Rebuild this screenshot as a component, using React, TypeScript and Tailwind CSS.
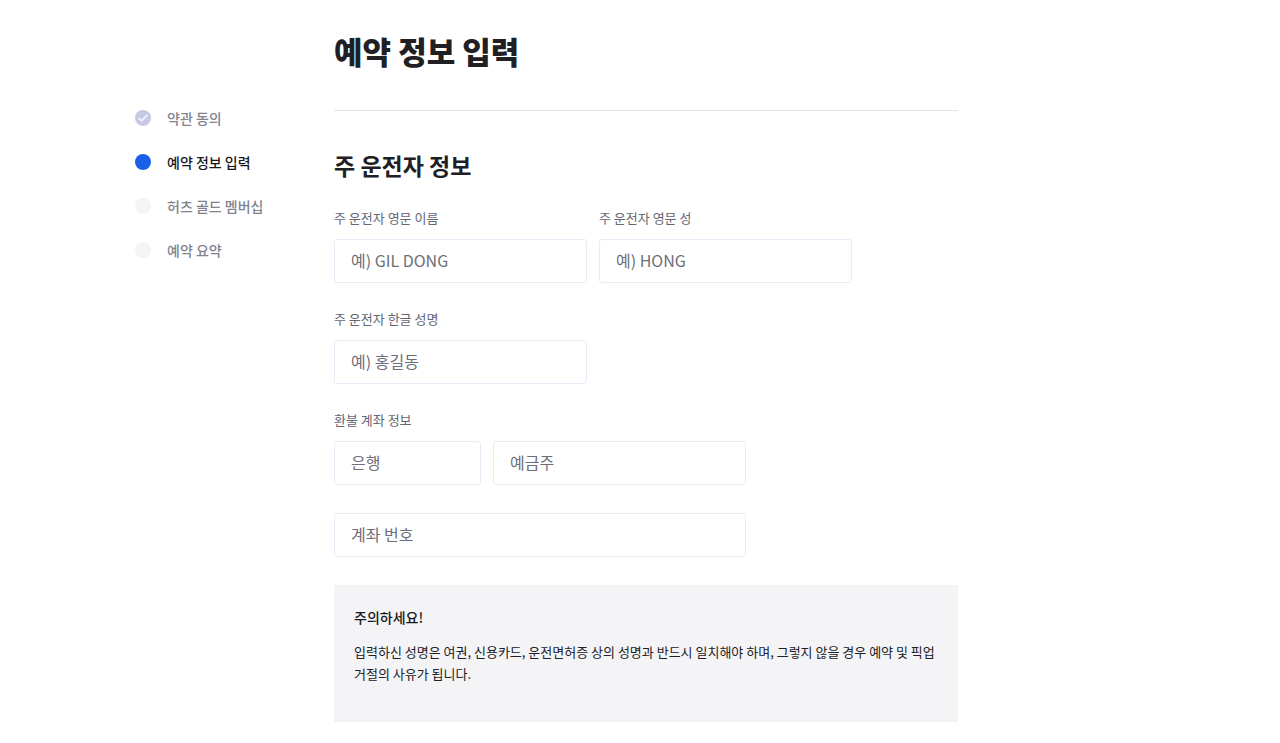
import { InputHTMLAttributes } from "react";

type StepState = "done" | "current" | "upcoming";

interface Step {
    label: string;
    state: StepState;
}

const steps: Step[] = [
    { label: "약관 동의", state: "done" },
    { label: "예약 정보 입력", state: "current" },
    { label: "허츠 골드 멤버십", state: "upcoming" },
    { label: "예약 요약", state: "upcoming" },
];

const dotStyles: Record<StepState, string> = {
    done: "bg-[#c6c8e4]",
    current: "bg-[#1a5fe8]",
    upcoming: "bg-[#f4f4f7]",
};

function StepItem({ step }: { step: Step }) {
    const isCurrent = step.state === "current";

    return (
        <li aria-current={isCurrent ? "step" : undefined} className="flex items-center gap-4 h-5">
            <span className={`flex items-center justify-center w-4 h-4 rounded-full ${dotStyles[step.state]}`}>
                {step.state === "done" && (
                    <svg viewBox="0 0 16 16" className="w-4 h-4" fill="none" stroke="#f1f1fa" strokeWidth="1.8">
                        <path d="M3.6 7.8l3 3 5.8-5.8" />
                    </svg>
                )}
            </span>
            <span className={`text-sm font-medium ${isCurrent ? "text-[#18181c]" : "text-[#83838f]"}`}>
                {step.label}
            </span>
        </li>
    );
}

function TextField({ className = "", ...props }: InputHTMLAttributes<HTMLInputElement>) {
    return (
        <input
            type="text"
            className={`h-11 px-4 pb-0.5 border border-[#ebebf7] rounded-[3px] bg-white text-base text-[#202024] placeholder:text-[#6e6e78] outline-none focus:border-[#1a5fe8] ${className}`}
            {...props}
        />
    );
}

function LabeledField({ id, label, placeholder }: { id: string; label: string; placeholder: string }) {
    return (
        <div className="flex flex-col gap-3.5">
            <label htmlFor={id} className="text-[13px] leading-[15px] text-[#666672]">{label}</label>
            <TextField id={id} placeholder={placeholder} className="w-[253px]" />
        </div>
    );
}

export default function App() {
    return (
        <div className="flex min-h-screen bg-white pl-[135px] pr-4 pb-5 font-['Noto_Sans_CJK_KR',sans-serif] text-[#202024]">
            <nav aria-label="예약 단계" className="w-[199px] shrink-0 pt-27">
                <ol className="flex flex-col gap-6">
                    {steps.map((step) => (
                        <StepItem key={step.label} step={step} />
                    ))}
                </ol>
            </nav>

            <main className="flex-1 max-w-[624px] pt-8">
                <h1 className="text-[31px] leading-[38px] font-black pb-10 border-b border-[#e6e6ea]">예약 정보 입력</h1>

                <form>
                    <h2 className="mt-10 text-[23px] leading-7 font-bold">주 운전자 정보</h2>

                    <div className="flex flex-col gap-7 mt-[31px]">
                        <div className="flex gap-3">
                            <LabeledField id="first-name" label="주 운전자 영문 이름" placeholder="예) GIL DONG" />
                            <LabeledField id="last-name" label="주 운전자 영문 성" placeholder="예) HONG" />
                        </div>

                        <LabeledField id="korean-name" label="주 운전자 한글 성명" placeholder="예) 홍길동" />

                        <div className="flex flex-col gap-3.5">
                            <label htmlFor="bank" className="text-[13px] leading-[15px] text-[#666672]">환불 계좌 정보</label>
                            <div className="flex gap-3">
                                <TextField id="bank" placeholder="은행" className="w-[147px]" />
                                <TextField aria-label="예금주" placeholder="예금주" className="w-[253px]" />
                            </div>
                        </div>

                        <TextField aria-label="계좌 번호" placeholder="계좌 번호" className="w-[412px]" />

                        <section className="bg-[#f4f4f7] px-5 pt-6 pb-[37px]">
                            <h3 className="text-sm leading-4 font-medium text-[#18181c]">주의하세요!</h3>
                            <p className="mt-4 text-[13px] leading-[22px]">
                                입력하신 성명은 여권, 신용카드, 운전면허증 상의 성명과 반드시 일치해야 하며, 그렇지 않을 경우 예약 및 픽업 거절의 사유가 됩니다.
                            </p>
                        </section>
                    </div>
                </form>
            </main>
        </div>
    );
}
